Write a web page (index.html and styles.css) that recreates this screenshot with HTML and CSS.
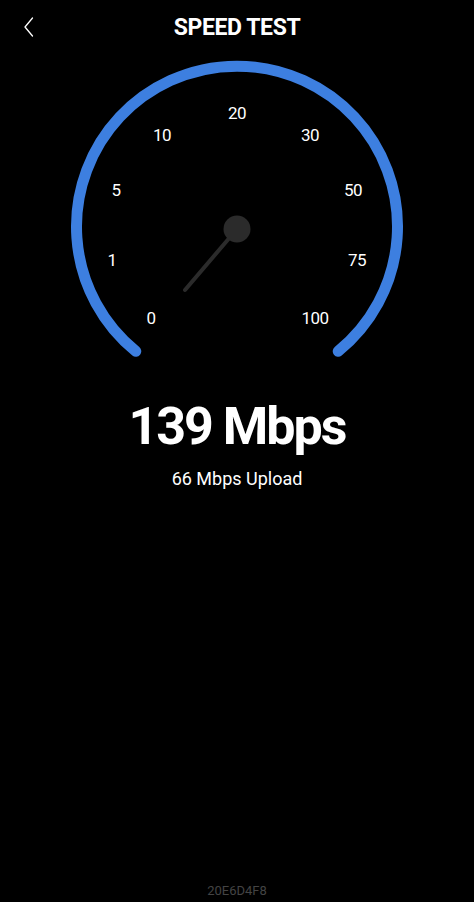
FILE: index.html
```html
<!DOCTYPE html>
<html lang="en">
<head>
    <meta charset="UTF-8">
    <meta name="viewport" content="width=device-width, initial-scale=1.0">
    <title>Speed Test</title>
    <link rel="stylesheet" href="styles.css">
</head>
<body>
    <div class="screen">
        <header class="topbar">
            <a class="back" href="#">
                <svg width="14" height="22" viewBox="0 0 14 22"><path d="M10.5 2 L3 11 L10.5 20" fill="none" stroke="#fff" stroke-width="1.3" stroke-linecap="round" stroke-linejoin="round"/></svg>
            </a>
            <h1>SPEED TEST</h1>
        </header>

        <section class="gauge">
            <svg width="474" height="316" viewBox="0 54 474 316">
                <!-- dial arc -->
                <path d="M135.8 351.2 A160.5 160.5 0 1 1 338.2 351.2" fill="none" stroke="#3d7fe0" stroke-width="11" stroke-linecap="round"/>
                <!-- scale -->
                <g class="ticks" text-anchor="middle">
                    <text x="151" y="324">0</text>
                    <text x="112" y="266">1</text>
                    <text x="116" y="196">5</text>
                    <text x="162" y="141">10</text>
                    <text x="237" y="119">20</text>
                    <text x="310" y="141">30</text>
                    <text x="353" y="196">50</text>
                    <text x="357" y="266">75</text>
                    <text x="315" y="324">100</text>
                </g>
                <!-- needle -->
                <line x1="237" y1="229" x2="185" y2="290" stroke="#2b2b2b" stroke-width="4" stroke-linecap="round"/>
                <circle cx="237" cy="229" r="13.5" fill="#2b2b2b"/>
            </svg>
        </section>

        <section class="result">
            <div class="download">139 Mbps</div>
            <div class="upload">66 Mbps Upload</div>
        </section>

        <footer class="device-id">20E6D4F8</footer>
    </div>
</body>
</html>
```
FILE: styles.css
```css
body {
    margin: 0;
    padding: 0;
    background-color: #000;
    color: #fff;
    font-family: Roboto, "Noto Sans", Arial, sans-serif;
}

.screen {
    display: flex;
    flex-direction: column;
    height: 902px;
}

.topbar {
    position: relative;
    display: flex;
    justify-content: center;
    align-items: center;
    height: 54px;
}

.topbar h1 {
    margin: 0;
    font-size: 23px;
    font-weight: bold;
    letter-spacing: -0.4px;
}

.topbar .back {
    position: absolute;
    left: 22px;
    top: 16px;
    display: block;
    width: 14px;
    height: 22px;
}

.gauge {
    display: flex;
    justify-content: center;
}

.gauge svg {
    display: block;
}

.gauge .ticks text {
    fill: #fff;
    font-size: 17px;
    font-family: Roboto, "Noto Sans", Arial, sans-serif;
    letter-spacing: -0.5px;
}

.result {
    display: flex;
    flex-direction: column;
    align-items: center;
}

.download {
    margin-top: 27px;
    font-size: 52px;
    line-height: 60px;
    font-weight: bold;
    letter-spacing: -2px;
}

.upload {
    margin-top: 10px;
    font-size: 18px;
    line-height: 24px;
}

.device-id {
    margin-top: auto;
    padding-bottom: 3px;
    text-align: center;
    font-size: 13px;
    line-height: 16px;
    color: #444;
}
```
